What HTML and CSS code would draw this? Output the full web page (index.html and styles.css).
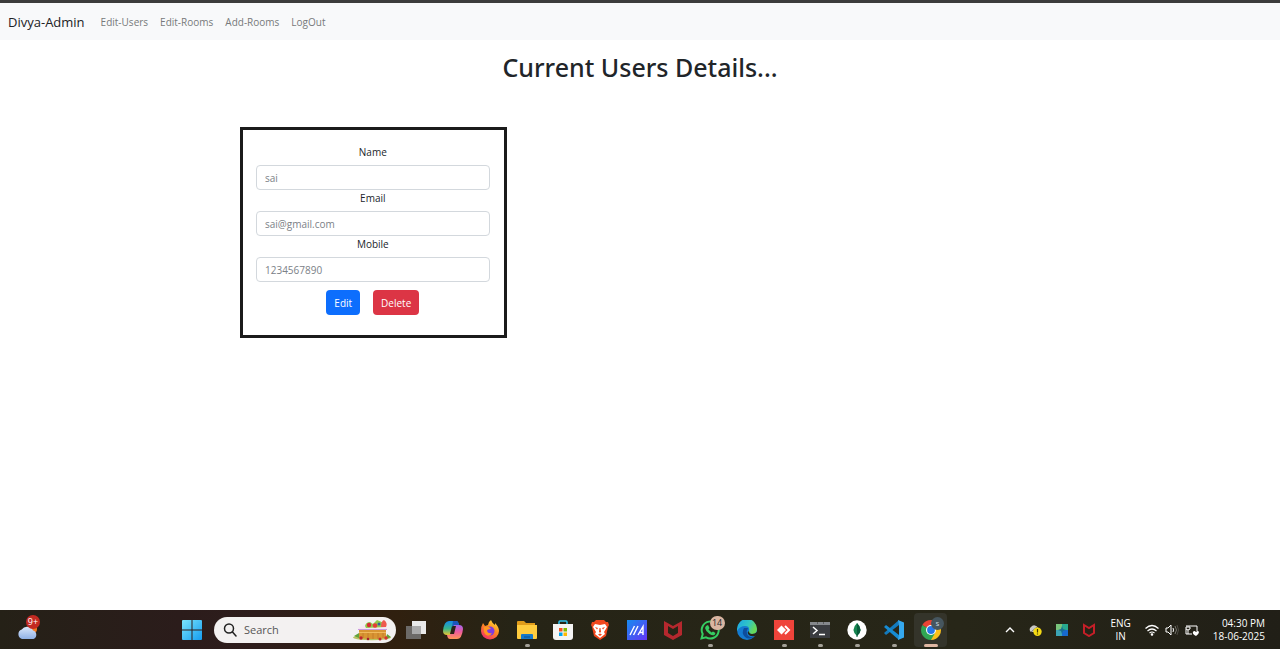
FILE: index.html
```html
<!DOCTYPE html>
<html lang="en">
<head>
<meta charset="utf-8">
<title>Divya-Admin</title>
<link rel="stylesheet" href="styles.css">
</head>
<body>
<header class="navbar">
  <a class="brand" href="#">Divya-Admin</a>
  <nav class="links">
    <a href="#">Edit-Users</a>
    <a href="#">Edit-Rooms</a>
    <a href="#">Add-Rooms</a>
    <a href="#">LogOut</a>
  </nav>
</header>
<main class="page">
  <h1 class="title">Current Users Details...</h1>
  <div class="cards">
    <form class="card">
      <label for="name">Name</label>
      <input id="name" type="text" placeholder="sai">
      <label for="email">Email</label>
      <input id="email" type="email" placeholder="sai@gmail.com">
      <label for="mobile">Mobile</label>
      <input id="mobile" type="tel" placeholder="1234567890">
      <div class="actions">
        <button class="btn edit" type="button">Edit</button>
        <button class="btn delete" type="button">Delete</button>
      </div>
    </form>
  </div>
</main>
<footer class="taskbar">
  <div class="side">
    <button class="weather" type="button" aria-label="Weather">
      <svg width="24" height="20" viewBox="0 0 24 20"><defs><linearGradient id="cl" x2="0" y2="1"><stop stop-color="#dbe8fb"/><stop offset="1" stop-color="#8fb0e6"/></linearGradient></defs><circle cx="17" cy="9" r="4" fill="#f07a24"/><path d="M6 19a5 5 0 0 1-.3-9.500A6.500 6.500 0 0 1 17 10.500 4.500 4.500 0 0 1 17.500 19z" fill="url(#cl)"/></svg>
      <span class="badge red">9+</span>
    </button>
  </div>
  <div class="center">
    <button class="start" type="button" aria-label="Start">
      <svg width="20" height="20" viewBox="0 0 20 20"><defs><linearGradient id="win" x2="1" y2="1"><stop stop-color="#7be4fb"/><stop offset="1" stop-color="#149cf0"/></linearGradient></defs><path fill="url(#win)" d="M1 0h8.500v9.500H0V1a1 1 0 0 1 1-1zm9.500 0H19a1 1 0 0 1 1 1v8.500h-9.500zM0 10.500h9.500V20H1a1 1 0 0 1-1-1zm10.500 0H20V19a1 1 0 0 1-1 1h-8.500z"/></svg>
    </button>
    <div class="search">
      <svg width="14" height="14" viewBox="0 0 14 14" fill="none" stroke="#222" stroke-width="1.500" stroke-linecap="round"><circle cx="6" cy="5.500" r="4.500"/><path d="M9.500 9l3.500 4"/></svg>
      <input type="search" aria-label="Search" placeholder="Search">
      <svg width="40" height="22" viewBox="0 0 40 22"><ellipse cx="20" cy="18.500" rx="19" ry="2.800" fill="#b9c463"/><path d="M2 17l5-3v5zM35 15l4 3-5 2z" fill="#62a33b"/><path d="M7 9l27-1v11q-13 2-27 0z" fill="#d99532"/><path d="M7 13h27v1H7z" fill="#f0b95c"/><path d="M11 14v5m5-5v6m5-6v6m5-6v6m5-6v5" stroke="#c47d2b"/><path d="M6 9l8-4h18l3 4v2H6z" fill="#f6e6f2"/><path d="M6 10.500h29" stroke="#c79ade"/><path d="M13 7q1-4 5-4l3 2 4-4 7 3 2 4-20 1z" fill="#8fca4c"/><circle cx="17" cy="6" r="2.200" fill="#d82c35"/><circle cx="23" cy="6.500" r="2.300" fill="#e63d37"/><path d="M29 8q0-6 3-7 4 3 2 7z" fill="#ef5a4d"/><circle cx="27" cy="5" r="1.500" fill="#395d9b"/><circle cx="9" cy="19" r="1.700" fill="#bf2530"/><circle cx="16" cy="20" r="1.300" fill="#a8202c"/><circle cx="28" cy="20" r="1.500" fill="#c42a2f"/><circle cx="34" cy="19" r="1.700" fill="#d5342e"/></svg>
    </div>
    <div class="apps">
      <button class="app" type="button" aria-label="Task view"><svg viewBox="0 0 20 20"><path d="M6 1h14v13H6z" fill="#e9e9e9"/><path d="M0 6h15v13H0z" fill="#777" fill-opacity=".85"/><path d="M6 6h9v8H6z" fill="#aaa"/></svg></button>
      <button class="app" type="button" aria-label="Copilot"><svg viewBox="0 0 20 20"><defs><linearGradient id="c1" x2="0" y2="1"><stop stop-color="#138bea"/><stop offset=".55" stop-color="#38b68a"/><stop offset="1" stop-color="#e8c332"/></linearGradient><linearGradient id="c2" x2="0" y2="1"><stop stop-color="#a264ee"/><stop offset=".5" stop-color="#ee5b9b"/><stop offset="1" stop-color="#ff9655"/></linearGradient></defs><path d="M6 1h7q2 0 2.500 2l.5 2h-3L9 15H4q-4 0-4-4Q1 1 6 1z" fill="url(#c1)"/><path d="M14 19H7q-2 0-2.500-2L4 15h3l4-10h5q4 0 4 4-1 10-6 10z" fill="url(#c2)"/><path d="M9 6h4l-2 8H7z" fill="#2a2118"/><path d="M10 1h3q2 0 2.500 2l.5 2h-5l-2 2z" fill="#1956bd"/></svg></button>
      <button class="app" type="button" aria-label="Firefox"><svg viewBox="0 0 20 20"><defs><linearGradient id="ff" x1=".8" x2=".2" y2="1"><stop stop-color="#ffdd3c"/><stop offset=".45" stop-color="#ff8a1f"/><stop offset="1" stop-color="#f1286f"/></linearGradient></defs><path d="M3 3l2 3 3-1q0-3 3-5 1 3 4 5V3q4 4 4 8a9 8.500 0 0 1-18 0q0-5 2-8z" fill="url(#ff)"/><circle cx="10" cy="11" r="4.500" fill="#7d3be0"/><path d="M4 7l5 0 2 2q-4 0-4 2 1 3 5 2-2 4-6 2-3-3-2-8z" fill="#ff9722"/></svg></button>
      <button class="app running" type="button" aria-label="File Explorer"><svg viewBox="0 0 20 20"><path d="M0 2q0-1 1-1h6l2 2h9v5H0z" fill="#e09c1b"/><path d="M0 5h20v13q0 1-1 1H1q-1 0-1-1z" fill="#ffcc3e"/><path d="M4 19v-4q0-1 1-1h10q1 0 1 1v4z" fill="#1678c9"/><path d="M7 17h6" stroke="#0b4e91"/></svg></button>
      <button class="app" type="button" aria-label="Microsoft Store"><svg viewBox="0 0 20 20"><path d="M6 5V2q0-1 1-1h6q1 0 1 1v3" fill="none" stroke="#2fc1ee" stroke-width="1.500"/><path d="M0 4h20v13q0 3-3 3H3q-3 0-3-3z" fill="#f4f4f4"/><path d="M6 8h3.500v3.500H6z" fill="#f25022"/><path d="M10.500 8H14v3.500h-3.500z" fill="#7fba00"/><path d="M6 12.500h3.500V16H6z" fill="#00a4ef"/><path d="M10.500 12.500H14V16h-3.500z" fill="#ffb900"/></svg></button>
      <button class="app" type="button" aria-label="Brave"><svg viewBox="0 0 20 20"><path d="M6 0h8l2 2h2l1 3-1 2-2 9-6 4-6-4-2-9-1-2 1-3h2z" fill="#f1471d"/><path d="M5 4l5 1 5-1 2 3-3 5 1 2-5 4-5-4 1-2-3-5z" fill="#fff"/><path d="M5 7l3 1-1 1.500zm10 0l-3 1 1 1.500zM9.500 8h1l.5 4-1 .7L9 12zM8 14.500l2-1 2 1-2 1.500z" fill="#f1471d"/></svg></button>
      <button class="app" type="button" aria-label="MyASUS"><svg viewBox="0 0 20 20"><defs><linearGradient id="as" x2="1" y2="1"><stop stop-color="#168cf0"/><stop offset="1" stop-color="#6634f4"/></linearGradient></defs><path d="M0 0h20v20H0z" fill="url(#as)"/><path d="M3 15L7.500 6M6.500 15L11 6M11 15l5-8.500V15M13 12.500h3" fill="none" stroke="#fff" stroke-width="1.400"/></svg></button>
      <button class="app" type="button" aria-label="McAfee"><svg viewBox="0 0 20 20"><path d="M1 1l9 5 9-5v14l-9 5-9-5zM5 6v7l5 3 5-3V6l-5 3z" fill="#b5282e" fill-rule="evenodd"/></svg></button>
      <button class="app running" type="button" aria-label="WhatsApp"><svg viewBox="0 0 20 20"><path d="M1.500 18.500l1.200-4.500A8.500 8.500 0 1 1 6 17.400z" fill="none" stroke="#35cd62" stroke-width="2"/><path d="M6 6l2-1 1.500 3-1 1.500 3 3 1.500-1 2.500 1.500-1 2q-2 1-5-1-4-3-4.500-6z" fill="#35cd62"/></svg><span class="badge tan">14</span></button>
      <button class="app" type="button" aria-label="Edge"><svg viewBox="0 0 20 20"><defs><linearGradient id="eg" x2="1" y2=".4"><stop stop-color="#1aa3e8"/><stop offset=".6" stop-color="#31c6c4"/><stop offset="1" stop-color="#68d957"/></linearGradient></defs><circle cx="10" cy="10" r="10" fill="#147bd1"/><path d="M0 9A10 10 0 0 1 20 9q0 5-5 5-4 0-3-3 1-5-4-5-5 0-8 5z" fill="url(#eg)"/><path d="M7 8q-3 5 1 9 4 3 9 0-5 1-7-3-1-3 1-6z" fill="#0d4d9d"/><path d="M12 11q0 3 3 3 3 0 5-2v2l-2 2q-5 1-7-2-1-2 1-3z" fill="#272517"/></svg></button>
      <button class="app running" type="button" aria-label="AnyDesk"><svg viewBox="0 0 20 20"><path d="M0 0h20v20H0z" fill="#ef443b"/><path d="M7.500 5.500L12 10l-4.500 4.500L3 10z" fill="#fff"/><path d="M11 6l4 4-4 4" fill="none" stroke="#fff" stroke-width="2"/></svg></button>
      <button class="app running" type="button" aria-label="Terminal"><svg viewBox="0 0 20 20"><path d="M0 2h20v16H0z" fill="#3a3c40"/><path d="M0 2h20v3H0z" fill="#85888c"/><path d="M7 3h1M13 3h1" stroke="#333"/><path d="M3 7l4 3.500L3 14M9 14.500h6" fill="none" stroke="#fff" stroke-width="1.500"/></svg></button>
      <button class="app running" type="button" aria-label="MongoDB Compass"><svg viewBox="0 0 20 20"><circle cx="10" cy="10" r="9.700" fill="#fff"/><path d="M10 3q7 7 0 13-7-6 0-13z" fill="#15854f"/><path d="M10 3q7 7 0 13z" fill="#075c3b"/><path d="M10 14v3" stroke="#075c3b"/></svg></button>
      <button class="app running" type="button" aria-label="Visual Studio Code"><svg viewBox="0 0 20 20"><path d="M15 5L2 15l-2-2L15 0z" fill="#137abd"/><path d="M15 15L2 5 0 7l15 13z" fill="#168bd2"/><path d="M14 0l6 2.500v15L14 20l1-5V5z" fill="#35a8ee"/></svg></button>
      <button class="app running active" type="button" aria-label="Chrome"><svg viewBox="0 0 20 20"><path d="M10 10V5h8.660A10 10 0 0 1 10 20z" fill="#fbc11b"/><path d="M10 10l4 3-4 7A10 10 0 0 1 1.340 5z" fill="#30a553"/><path d="M10 10L1.340 5A10 10 0 0 1 18.660 5H10z" fill="#e94335"/><circle cx="10" cy="10" r="5" fill="#fff"/><circle cx="10" cy="10" r="3.900" fill="#2878e8"/></svg><span class="badge profile">s</span></button>
    </div>
  </div>
  <div class="tray">
    <div class="icons">
      <svg width="10" height="8" viewBox="0 0 10 8" fill="none" stroke="#fff" stroke-width="1.400"><path d="M1 6l4-4 4 4"/></svg>
      <svg width="14" height="12" viewBox="0 0 14 12"><path d="M3 8a3 3 0 0 1 0-5 4 4 0 0 1 7 1l1 4z" fill="#c7c7c7"/><path d="M3 8l6-5" stroke="#777"/><circle cx="9.500" cy="7.700" r="4.200" fill="#f4d914"/><path d="M9.500 5v3.500m0 1v1" stroke="#443b00" stroke-width="1.200"/></svg>
      <svg width="14" height="14" viewBox="0 0 14 14"><path d="M1 1h6v6H1z" fill="#79c47b"/><path d="M7 1h6v6H7z" fill="#28a88f"/><path d="M1 7h6v6H1z" fill="#3ba4b5"/><path d="M7 7h6v6H7z" fill="#1769ce"/><path d="M7 3l1 3 3 1-3 1-1 3-1-3-3-1 3-1z" fill="#176e93"/></svg>
      <svg width="14" height="14" viewBox="0 0 14 14" fill="none" stroke="#c51f28" stroke-width="2"><path d="M2 2l5 3 5-3v8l-5 3-5-3z"/></svg>
    </div>
    <div class="lang">ENG<br>IN</div>
    <div class="status">
      <svg width="14" height="12" viewBox="0 0 14 12" fill="none" stroke="#fff" stroke-width="1.200"><path d="M.5 4.500q6.500-6 13 0M2.500 7q4.500-4 9 0M4.500 9q2.500-2 5 0"/><circle cx="7" cy="10.500" r=".7" fill="#fff"/></svg>
      <svg width="14" height="12" viewBox="0 0 14 12" fill="none" stroke="#fff"><path d="M1 4h2l3-3v10L3 8H1zM8 4q1 2 0 4"/><path d="M10 2q3 4 0 8" stroke="#77766f"/><path d="M12 1q3 5 0 10" stroke="#4d4b43"/></svg>
      <svg width="14" height="12" viewBox="0 0 14 12" fill="none" stroke="#fff"><path d="M5 2h7v5M1 5v5h6M2 1v2M4 1v2M1 3h4v2q-2 2-4 0zM3 6v4"/><path d="M11 12q-4-2-3-4 1-2 3 0 2-2 3 0 0 2-3 4z" fill="#fff" stroke="none"/></svg>
    </div>
    <div class="clock">04:30 PM<br>18-06-2025</div>
  </div>
</footer>
</body>
</html>
```
FILE: styles.css
```css
* { box-sizing: border-box; }
body {
  margin: 0;
  min-height: 100vh;
  display: flex;
  flex-direction: column;
  background: #fff;
  color: #212529;
  font: 11px/16px "Open Sans", "Noto Sans", sans-serif;
}
button, input { font: inherit; color: inherit; }
button { border: 0; padding: 0; background: none; }
a { text-decoration: none; }

.navbar {
  display: flex;
  align-items: center;
  gap: 16px;
  min-height: 40px;
  padding: 0 8px;
  border-top: 3px solid #3c3c3c;
  background: #f8f9fa;
}
.brand { font-size: 13px; color: #202124; }
.links { display: flex; gap: 12px; font-size: 10px; }
.links a { color: #77797b; }

.page { flex: 1; padding: 10px 0; }
.title {
  margin: 0;
  text-align: center;
  font: 500 25px/34px "Noto Sans", sans-serif;
}
.cards {
  max-width: 800px;
  margin: 43px auto 0;
  display: grid;
  grid-template-columns: repeat(3, 1fr);
}
.card {
  display: flex;
  flex-direction: column;
  padding: 14px 14px 20px 13px;
  border: 3px solid #1b1b1b;
  text-align: center;
  font-size: 10px;
}
.card input {
  height: 25px;
  margin-top: 5px;
  padding: 0 8px;
  border: 1px solid #d3d8dd;
  border-radius: 4px;
  background: #fff;
}
.card input::placeholder { color: #7b8187; opacity: 1; }
.actions { display: flex; justify-content: center; gap: 13px; margin-top: 8px; }
.btn { height: 25px; padding: 0 8px; border-radius: 4px; color: #fff; }
.edit { background: #0d6efd; }
.delete { background: #dc3545; }

.taskbar {
  display: flex;
  align-items: center;
  height: 39px;
  background: linear-gradient(90deg, #252117 0, #2b1c1b 14%, #2e1d1c 20%, #30200f 31%, #262416 40%, #272618 75%, #211f17 100%);
  color: #fff;
}
.side { flex: 0 1 182px; padding-left: 16px; }
.weather { position: relative; display: flex; width: 24px; height: 20px; }
.weather svg { display: block; }
.center { display: flex; align-items: center; flex: none; }
.start { display: flex; margin-right: 12px; }
.search {
  display: flex;
  align-items: center;
  width: 182px;
  height: 26px;
  padding: 0 4px 0 9px;
  border-radius: 13px;
  background: #f3f1f1;
}
.search svg { flex: none; }
.search input {
  flex: 1;
  min-width: 0;
  padding: 0 7px;
  border: 0;
  outline: 0;
  background: none;
  font-size: 11px;
}
.search input::placeholder { color: #565656; opacity: 1; }
.apps { display: grid; grid-template-columns: repeat(15, 1fr); width: 551px; margin-left: 2px; }
.app {
  position: relative;
  display: flex;
  align-items: center;
  justify-content: center;
  height: 34px;
}
.app svg { width: 20px; height: 20px; }
.running::after {
  content: "";
  position: absolute;
  bottom: 0;
  left: 50%;
  width: 5px;
  height: 3px;
  margin-left: -2px;
  border-radius: 2px;
  background: #a3a097;
}
.active { margin: 0 2px; border-radius: 4px; background: #34342a; }
.active::after { width: 14px; margin-left: -7px; background: #dfb7a2; }
.badge {
  position: absolute;
  border-radius: 8px;
  text-align: center;
  font-size: 9px;
  line-height: 14px;
}
.red { top: -5px; right: 0; width: 14px; height: 14px; background: #c32a22; }
.tan { top: 3px; right: 4px; width: 15px; height: 14px; background: #d9b5a1; color: #262626; }
.profile { top: 4px; right: 3px; width: 13px; height: 13px; background: #46565f; color: #c4d4df; font-size: 8px; line-height: 12px; }

.tray {
  flex: 1;
  display: flex;
  align-items: center;
  justify-content: flex-end;
  gap: 14px;
  padding-right: 15px;
  font-size: 10px;
  line-height: 13px;
  white-space: nowrap;
}
.tray svg { flex: none; }
.icons, .status { display: flex; align-items: center; }
.icons { gap: 13px; }
.status { gap: 6px; }
.lang { text-align: center; }
.clock { text-align: right; }
```
